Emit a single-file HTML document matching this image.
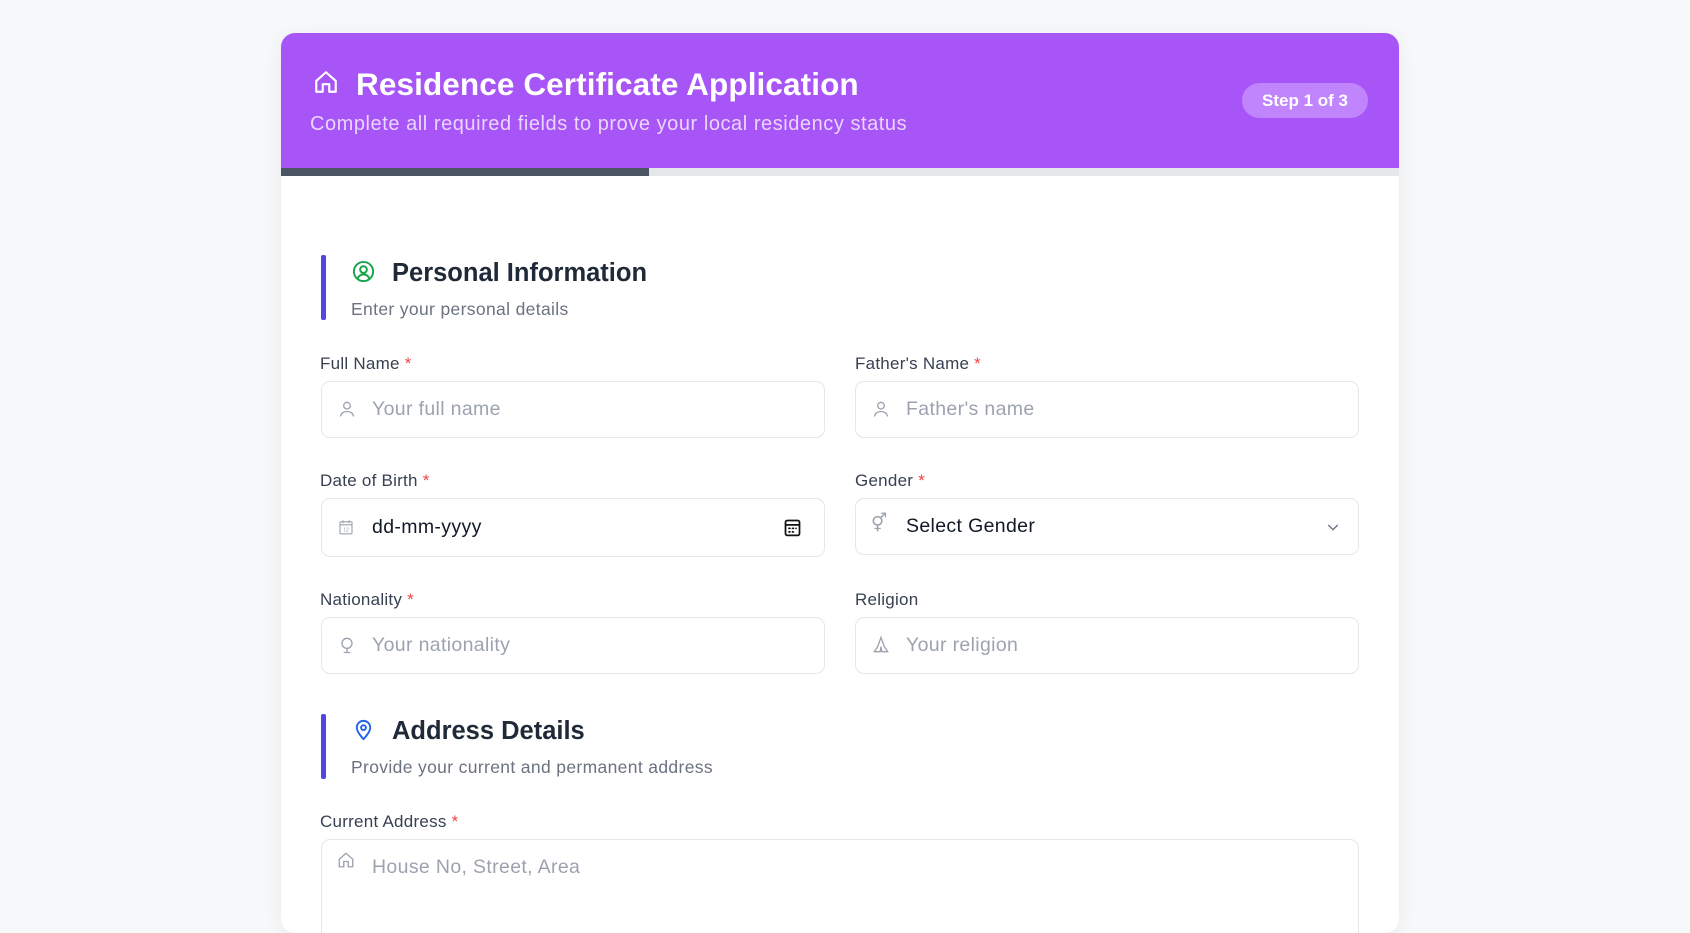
<!DOCTYPE html>
<html><head><style>
*{box-sizing:border-box;margin:0;padding:0}
body{width:1690px;height:912px;overflow:hidden;background:#f7f8fa;font-family:"Liberation Sans",sans-serif;position:relative}
.card{position:absolute;left:281px;top:33px;width:1118px;height:900px;background:#fff;border-radius:14px;box-shadow:0 4px 20px rgba(0,0,0,.06);overflow:hidden}
.hdr{position:absolute;left:0;top:0;width:100%;height:135px;background:#a855f7}
.prog{position:absolute;left:0;top:135px;width:100%;height:8px;background:#e5e7eb}
.prog div{width:368px;height:100%;background:#4b5563}
.title{position:absolute;left:75px;top:33px;color:#fff;font-size:31.5px;font-weight:bold;letter-spacing:.1px}
.sub{position:absolute;left:29px;top:80px;color:#e9d5ff;font-size:20px;letter-spacing:.55px}
.pill{position:absolute;left:961px;top:50px;width:126px;height:35px;border-radius:18px;background:#c084fc;color:#fff;font-weight:bold;font-size:17px;text-align:center;line-height:35px}
.abs{position:absolute}
.bar{position:absolute;left:40px;width:5px;background:#4f46e5;border-radius:2px}
.sh{position:absolute;left:111px;font-size:25.5px;font-weight:bold;color:#1f2937}
.ss{position:absolute;left:70px;font-size:17.5px;color:#6b7280;letter-spacing:.35px}
.lbl{position:absolute;font-size:17px;color:#374151;letter-spacing:.25px}
.lbl b{color:#ef4444;font-weight:normal}
.in{position:absolute;border:1px solid #e5e7eb;border-radius:9px;background:#fff;width:504px}
.ph{position:absolute;left:50px;font-size:19.5px;color:#9ca3af;letter-spacing:.35px}
.ic{position:absolute;left:15px}
</style></head><body>
<div class="card">
<div class="hdr">
<svg class="abs" style="left:32px;top:36px" width="26" height="26" viewBox="0 0 24 24" fill="none" stroke="#fff" stroke-width="2" stroke-linejoin="round"><path d="M3 11 12 3l9 8v10h-6v-7H9v7H3z"/></svg>
<div class="title">Residence Certificate Application</div>
<div class="sub">Complete all required fields to prove your local residency status</div>
<div class="pill">Step 1 of 3</div>
</div>
<div class="prog"><div></div></div>

<div class="bar" style="top:222px;height:65px"></div>
<svg class="abs" style="left:71px;top:227px" width="23" height="23" viewBox="0 0 24 24" fill="none" stroke="#16a34a" stroke-width="2"><circle cx="12" cy="12" r="10"/><circle cx="12" cy="10" r="3.5"/><path d="M6 19c1.5-3 4-4 6-4s4.5 1 6 4"/></svg>
<div class="sh" style="top:226px">Personal Information</div>
<div class="ss" style="top:266px">Enter your personal details</div>

<div class="lbl" style="left:39px;top:321px">Full Name <b>*</b></div>
<div class="in" style="left:40px;top:348px;height:57px"><svg class="ic" style="top:17px" width="20" height="20" viewBox="0 0 24 24" fill="none" stroke="#9ca3af" stroke-width="1.6"><circle cx="12" cy="8" r="4"/><path d="M4 21c1-4 4-6 8-6s7 2 8 6"/></svg><div class="ph" style="top:16px">Your full name</div></div>
<div class="lbl" style="left:574px;top:321px">Father's Name <b>*</b></div>
<div class="in" style="left:574px;top:348px;height:57px"><svg class="ic" style="top:17px" width="20" height="20" viewBox="0 0 24 24" fill="none" stroke="#9ca3af" stroke-width="1.6"><circle cx="12" cy="8" r="4"/><path d="M4 21c1-4 4-6 8-6s7 2 8 6"/></svg><div class="ph" style="top:16px">Father's name</div></div>

<div class="lbl" style="left:39px;top:438px">Date of Birth <b>*</b></div>
<div class="in" style="left:40px;top:465px;height:59px"><svg class="ic" style="top:19px" width="18" height="18" viewBox="0 0 24 24" fill="none" stroke="#9ca3af" stroke-width="1.5"><rect x="4" y="5" width="16" height="16" rx="1"/><path d="M4 9h16M8 3v4M16 3v4"/><text x="12" y="18" font-size="7" text-anchor="middle" fill="#9ca3af" stroke="none">12</text></svg><div class="ph" style="top:17px;color:#111827">dd-mm-yyyy</div>
<svg class="abs" style="left:460px;top:18px" width="21" height="21" viewBox="0 0 24 24" fill="none" stroke="#111" stroke-width="2"><rect x="4" y="4" width="16" height="17" rx="2"/><path d="M4 9h16"/><path d="M8 13h1M12 13h1M16 13h0M8 17h1M12 17h1" stroke-linecap="round"/></svg></div>
<div class="lbl" style="left:574px;top:438px">Gender <b>*</b></div>
<div class="in" style="left:574px;top:465px;height:57px"><div class="ic" style="top:14px;font-size:18px;color:#9ca3af">⚥</div><div class="ph" style="top:16px;color:#111827">Select Gender</div>
<svg class="abs" style="left:469px;top:20px" width="16" height="16" viewBox="0 0 24 24" fill="none" stroke="#6b7280" stroke-width="2"><path d="M5 9l7 7 7-7"/></svg></div>

<div class="lbl" style="left:39px;top:557px">Nationality <b>*</b></div>
<div class="in" style="left:40px;top:584px;height:57px"><svg class="ic" style="top:17px" width="20" height="20" viewBox="0 0 24 24" fill="none" stroke="#9ca3af" stroke-width="1.6"><circle cx="12" cy="10" r="6"/><path d="M12 16v5M8 21h8"/></svg><div class="ph" style="top:16px">Your nationality</div></div>
<div class="lbl" style="left:574px;top:557px">Religion</div>
<div class="in" style="left:574px;top:584px;height:57px"><svg class="ic" style="top:17px" width="20" height="20" viewBox="0 0 24 24" fill="none" stroke="#9ca3af" stroke-width="1.6"><path d="M12 3 8 14l-4 6h7l1-6 1 6h7l-4-6z"/></svg><div class="ph" style="top:16px">Your religion</div></div>

<div class="bar" style="top:681px;height:65px"></div>
<svg class="abs" style="left:71px;top:685px" width="23" height="23" viewBox="0 0 24 24" fill="none" stroke="#2563eb" stroke-width="2"><path d="M12 22s7-7 7-12a7 7 0 0 0-14 0c0 5 7 12 7 12z"/><circle cx="12" cy="10" r="2.5"/></svg>
<div class="sh" style="top:684px">Address Details</div>
<div class="ss" style="top:724px">Provide your current and permanent address</div>

<div class="lbl" style="left:39px;top:779px">Current Address <b>*</b></div>
<div class="in" style="left:40px;top:806px;height:120px;width:1038px"><svg class="ic" style="top:11px" width="18" height="18" viewBox="0 0 24 24" fill="none" stroke="#9ca3af" stroke-width="1.8"><path d="M3 11 12 3l9 8v10h-6v-7H9v7H3z"/></svg><div class="ph" style="top:16px">House No, Street, Area</div></div>
</div>
</body></html>
